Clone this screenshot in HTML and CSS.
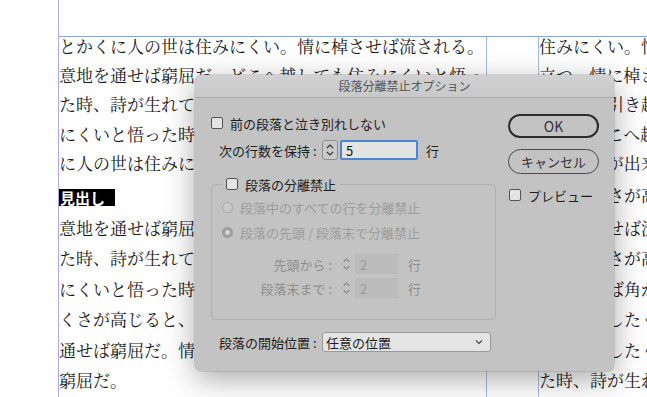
FILE: index.html
```html
<!DOCTYPE html>
<html lang="ja">
<head>
<meta charset="utf-8">
<title>段落分離禁止オプション</title>
<link rel="stylesheet" href="styles.css">
</head>
<body>
<div class="page">
  <div class="frames">
    <div class="frame col1">
      <div class="para top">
        <div class="ln">とかくに人の世は住みにくい。情に棹させば流される。</div>
        <div class="ln">意地を通せば窮屈だ。どこへ越しても住みにくいと悟っ</div>
        <div class="ln">た時、詩が生れて、画が出来る。とかくに人の世は住み</div>
        <div class="ln">にくいと悟った時、詩が生れて、画が出来る。とかくに</div>
        <div class="ln">に人の世は住みにくい。</div>
      </div>
      <div class="heading"><span class="hbox">見出し</span></div>
      <div class="para bottom">
        <div class="ln">意地を通せば窮屈だ。どこへ越しても住みにくいと悟っ</div>
        <div class="ln">た時、詩が生れて、画が出来る。とかくに人の世は住み</div>
        <div class="ln">にくいと悟った時、詩が生れて、画が出来る。とかくに</div>
        <div class="ln">くさが高じると、安い所へ引き越したくなる。意地を</div>
        <div class="ln">通せば窮屈だ。情に棹させば流される。とかくに人の世</div>
        <div class="ln">窮屈だ。</div>
      </div>
    </div>
    <div class="frame col2">
      <div class="para top">
        <div class="ln">住みにくい。情に棹させば流される。</div>
        <div class="ln">立つ。情に棹させば流される。</div>
        <div class="ln">安い所へ引き越したくなる。</div>
        <div class="ln">なる。どこへ越しても住みにくい。</div>
        <div class="ln">れて、画が出来る。</div>
      </div>
      <div class="para mid">
        <div class="ln">住みにくさが高じると、</div>
      </div>
      <div class="para bottom2">
        <div class="ln">情に棹させば流される。</div>
        <div class="ln">住みにくさが高じると、</div>
        <div class="ln">智に働けば角が立つ。</div>
        <div class="ln">へ引き越したくなる。</div>
        <div class="ln">へ引き越したくなる。</div>
        <div class="ln">た時、詩が生れて、</div>
      </div>
    </div>
  </div>
</div>

<div class="dialog">
  <div class="titlebar">段落分離禁止オプション</div>
  <div class="dbody">
    <div class="leftcol">
      <div class="row r1"><span class="cb"></span><span class="lbl">前の段落と泣き別れしない</span></div>
      <div class="row r2">
        <span class="flabel">次の行数を保持 :</span>
        <span class="stepper">
          <svg width="14" height="18" viewBox="0 0 14 18"><path d="M4 7 L7 4 L10 7" fill="none" stroke="#333" stroke-width="1.1"/><path d="M4 11 L7 14 L10 11" fill="none" stroke="#333" stroke-width="1.1"/></svg>
        </span>
        <span class="field focus">5</span>
        <span class="unit">行</span>
      </div>
      <fieldset class="group">
        <legend class="legend"><span class="cb"></span><span class="lbl">段落の分離禁止</span></legend>
        <div class="row rad1 dis"><span class="radio"></span><span class="lbl">段落中のすべての行を分離禁止</span></div>
        <div class="row rad2 dis"><span class="radio on"></span><span class="lbl">段落の先頭 / 段落末で分離禁止</span></div>
        <div class="row num n1 dis">
          <span class="rlabel">先頭から :</span>
          <span class="stepper off">
            <svg width="13" height="18" viewBox="0 0 13 18"><path d="M3.5 7 L6.5 4 L9.5 7" fill="none" stroke="#8a8a8a" stroke-width="1.1"/><path d="M3.5 11 L6.5 14 L9.5 11" fill="none" stroke="#8a8a8a" stroke-width="1.1"/></svg>
          </span>
          <span class="field off">2</span>
          <span class="unit">行</span>
        </div>
        <div class="row num n2 dis">
          <span class="rlabel">段落末まで :</span>
          <span class="stepper off">
            <svg width="13" height="18" viewBox="0 0 13 18"><path d="M3.5 7 L6.5 4 L9.5 7" fill="none" stroke="#8a8a8a" stroke-width="1.1"/><path d="M3.5 11 L6.5 14 L9.5 11" fill="none" stroke="#8a8a8a" stroke-width="1.1"/></svg>
          </span>
          <span class="field off">2</span>
          <span class="unit">行</span>
        </div>
      </fieldset>
      <div class="row r3">
        <span class="flabel">段落の開始位置 :</span>
        <span class="select"><span>任意の位置</span>
          <svg width="10" height="8" viewBox="0 0 10 8"><path d="M2 2.5 L5 5.5 L8 2.5" fill="none" stroke="#444" stroke-width="1.1"/></svg>
        </span>
      </div>
    </div>
    <div class="rightcol">
      <div class="btn ok">OK</div>
      <div class="btn cancel">キャンセル</div>
      <div class="row preview"><span class="cb"></span><span class="lbl">プレビュー</span></div>
    </div>
  </div>
</div>
</body>
</html>
```

FILE: styles.css
```css
html, body {
  margin: 0;
  padding: 0;
}
body {
  width: 647px;
  height: 397px;
  overflow: hidden;
  background: #ffffff;
  position: relative;
}
.page {
  margin-left: 58px;
  border-left: 1px solid #b3a8dc;
  height: 397px;
  padding-top: 36px;
  box-sizing: border-box;
}
.frames {
  display: flex;
  border-top: 1px solid #86a8de;
  height: 361px;
}
.frame {
  overflow: hidden;
  font-family: "Noto Serif CJK JP", "Noto Sans CJK JP", serif;
  font-size: 17px;
  color: #1a1a1a;
}
.col1 {
  width: 427px;
  border-right: 1px solid #a3bde6;
}
.col2 {
  margin-left: 51px;
  border-left: 1px solid #a3bde6;
  flex: 1;
}
.ln {
  white-space: nowrap;
}
.para.top {
  margin-top: -6px;
  line-height: 29.2px;
}
.para.bottom {
  margin-top: 8px;
  line-height: 30.4px;
}
.para.mid {
  margin-top: 3px;
  line-height: 30.4px;
}
.para.bottom2 {
  margin-top: 2.6px;
  line-height: 30.4px;
}
.heading {
  margin-top: 11px;
  height: 17px;
  line-height: 17px;
}
.hbox {
  display: inline-block;
  background: #000;
  color: #fff;
  font-family: "Noto Sans CJK JP", sans-serif;
  font-weight: 700;
  font-size: 15px;
  height: 17px;
  line-height: 17px;
  padding: 0 10px 0 1px;
}

/* dialog */
.dialog {
  position: absolute;
  left: 195px;
  top: 75px;
  width: 419px;
  height: 296px;
  background: #c3c3c3;
  border-radius: 6px;
  box-shadow: 0 8px 30px rgba(0, 0, 0, 0.34), 0 0 0 0.5px rgba(0, 0, 0, 0.2);
  font-family: "Noto Sans CJK JP", sans-serif;
  color: #1e1e1e;
  overflow: hidden;
}
.titlebar {
  height: 22px;
  line-height: 22px;
  text-align: center;
  font-size: 12px;
  color: #555;
  background: linear-gradient(#d0d0d0, #c9c9c9);
  border-bottom: 1px solid #a9a9a9;
}
.dbody {
  display: flex;
  padding: 16px 0 0 16px;
  gap: 12px;
}
.leftcol {
  width: 285px;
  display: flex;
  flex-direction: column;
}
.rightcol {
  width: 91px;
  display: flex;
  flex-direction: column;
}
.row {
  display: flex;
  align-items: center;
  font-size: 13px;
}
.r1 {
  height: 18px;
}
.cb {
  display: inline-block;
  width: 10px;
  height: 10px;
  border: 1px solid #555;
  border-radius: 2px;
  background: #e4e4e4;
  flex: none;
}
.lbl {
  margin-left: 7px;
  white-space: nowrap;
}
.r2 {
  margin-top: 8px;
  height: 20px;
}
.flabel {
  margin-left: 8px;
  width: 103px;
  white-space: nowrap;
}
.stepper {
  display: flex;
  align-items: center;
  justify-content: center;
  width: 14px;
  height: 18px;
  border: 1px solid #8e8e8e;
  border-radius: 3px;
  background: #c9c9c9;
}
.stepper.off {
  border: none;
  background: transparent;
  width: 13px;
}
.field {
  display: flex;
  align-items: center;
  box-sizing: border-box;
  height: 20px;
  font-size: 13px;
}
.field.focus {
  margin-left: 2px;
  width: 78px;
  border: 2px solid #4a86d6;
  border-radius: 2px;
  background: #e3e3e3;
  padding-left: 4px;
  color: #111;
}
.field.off {
  margin-left: 2px;
  width: 43px;
  background: #bbbbbb;
  border-radius: 2px;
  padding-left: 5px;
  color: #9b9b9b;
}
.unit {
  margin-left: 8px;
}
.group {
  margin: 17px 0 0 0;
  padding: 0 0 21px 10px;
  border: 1px solid #b0b0b0;
  border-radius: 4px;
  min-width: 0;
}
.legend {
  display: flex;
  align-items: center;
  padding: 0 4px;
  height: 14px;
  font-size: 13px;
}
.dis {
  color: #9c9c9c;
}
.radio {
  display: inline-block;
  box-sizing: border-box;
  width: 11px;
  height: 11px;
  border-radius: 50%;
  border: 1px solid #a3a3a3;
  background: #c9c9c9;
  flex: none;
}
.radio.on {
  border: 3.5px solid #9d9d9d;
  background: #d4d4d4;
}
.rad1 {
  margin-top: 8px;
  height: 16px;
}
.rad2 {
  margin-top: 9px;
  height: 16px;
}
.num {
  height: 20px;
}
.n1 {
  margin-top: 14px;
}
.n2 {
  margin-top: 4px;
}
.rlabel {
  width: 110px;
  padding-right: 5px;
  text-align: right;
  white-space: nowrap;
  color: #8e8e8e;
}
.num .stepper {
  margin-left: 3px;
}
.num .unit {
  margin-left: 10px;
  color: #8e8e8e;
}
.r3 {
  margin-top: 12px;
  height: 20px;
}
.select {
  display: flex;
  align-items: center;
  justify-content: space-between;
  box-sizing: border-box;
  width: 169px;
  height: 20px;
  border: 1px solid #999;
  border-radius: 3px;
  background: #e4e4e4;
  padding: 0 6px 0 3px;
}
.btn {
  box-sizing: border-box;
  width: 91px;
  display: flex;
  align-items: center;
  justify-content: center;
  color: #333;
}
.ok {
  height: 24px;
  border: 2px solid #2c2c2c;
  border-radius: 12px;
  font-size: 14px;
}
.cancel {
  margin-top: 11px;
  height: 25px;
  border: 1px solid #4c4c4c;
  border-radius: 12.5px;
  font-size: 13px;
}
.preview {
  margin-top: 14px;
  margin-left: 1px;
  height: 14px;
}
```
